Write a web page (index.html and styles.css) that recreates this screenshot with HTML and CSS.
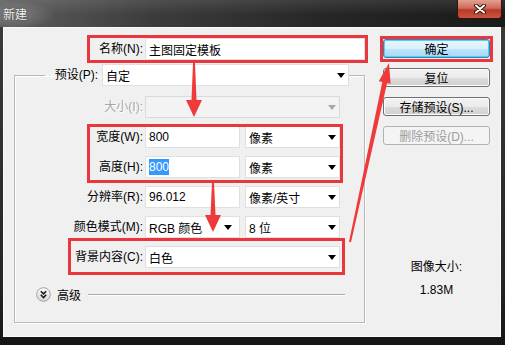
FILE: index.html
```html
<!DOCTYPE html>
<html lang="zh-CN">
<head>
  <meta charset="UTF-8" />
  <title>新建</title>
  <link rel="stylesheet" href="styles.css">
</head>
<body>

<div class="window">
  <div class="titlebar">
    <span class="title">新建</span>
    <div class="close">
      <svg width="14" height="10" viewBox="0 0 14 10">
        <path d="M3 1.5 L11 8.5 M11 1.5 L3 8.5" stroke="#3a1010" stroke-width="4" stroke-linecap="round"/>
        <path d="M3 1.5 L11 8.5 M11 1.5 L3 8.5" stroke="#fff" stroke-width="2" stroke-linecap="round"/>
      </svg>
    </div>
  </div>

  <div class="client">
    <div class="main">
      <div class="name-row">
        <label class="lbl">名称(N):</label>
        <div class="field name">主图固定模板</div>
      </div>

      <fieldset class="group">
        <legend>
          <label class="lbl legend-lbl">预设(P):</label>
          <div class="select preset"><span>自定</span><i class="caret"></i></div>
        </legend>

        <div class="grid">
          <label class="lbl dim">大小(I):</label>
          <div class="select span2 disabled"><span></span><i class="caret"></i></div>

          <label class="lbl">宽度(W):</label>
          <div class="field">800</div>
          <div class="select unit"><span>像素</span><i class="caret"></i></div>

          <label class="lbl">高度(H):</label>
          <div class="field"><span class="sel">800</span></div>
          <div class="select unit"><span>像素</span><i class="caret"></i></div>

          <label class="lbl">分辨率(R):</label>
          <div class="field">96.012</div>
          <div class="select unit"><span>像素/英寸</span><i class="caret"></i></div>

          <label class="lbl">颜色模式(M):</label>
          <div class="select mode"><span>RGB 颜色</span><i class="caret"></i></div>
          <div class="select unit"><span>8 位</span><i class="caret"></i></div>

          <label class="lbl">背景内容(C):</label>
          <div class="select span2"><span>白色</span><i class="caret"></i></div>
        </div>

        <div class="advanced">
          <svg class="adv-icon" width="15" height="15" viewBox="0 0 15 15">
            <defs>
              <linearGradient id="ag" x1="0" y1="0" x2="0" y2="1">
                <stop offset="0" stop-color="#ffffff"/>
                <stop offset="1" stop-color="#d4d4d4"/>
              </linearGradient>
            </defs>
            <circle cx="7.5" cy="7.5" r="6.8" fill="url(#ag)" stroke="#a0a0a0"/>
            <path d="M4.8 4.2 L7.5 6.9 L10.2 4.2 M4.8 7.8 L7.5 10.5 L10.2 7.8" fill="none" stroke="#1a1a1a" stroke-width="1.6"/>
          </svg>
          <span>高级</span>
          <div class="rule"></div>
        </div>
      </fieldset>
    </div>

    <div class="side">
      <button class="btn default">确定</button>
      <button class="btn">复位</button>
      <button class="btn">存储预设(S)...</button>
      <button class="btn" disabled>删除预设(D)...</button>
      <div class="info">
        <div>图像大小:</div>
        <div>1.83M</div>
      </div>
    </div>
  </div>

  <!-- red annotation marks drawn over the dialog -->
  <svg class="marks" width="505" height="345" viewBox="0 0 505 345">
    <g fill="none" stroke="#e8383d" stroke-width="3">
      <rect x="88.5" y="36.5" width="278" height="25"/>
      <rect x="88.5" y="125.5" width="253" height="56"/>
      <rect x="69.5" y="239.5" width="274" height="34"/>
      <rect x="381.5" y="37.5" width="110" height="23"/>
    </g>
    <g fill="#ee3a3a">
      <polygon points="193,63 195,63 196.5,100 202,100 194,117 186,100 191.5,100"/>
      <polygon points="212,183 214,183 215.5,215 221,215 213,232 205,215 210.5,215"/>
      <polygon points="349,241.8 351,242.2 387.1,83 390.6,83.8 389,63 378.8,81.2 382.3,82"/>
    </g>
  </svg>
</div>

</body>
</html>
```

FILE: styles.css
```css
body {
  margin: 0;
  font-family: "Liberation Sans", "Noto Sans CJK SC", sans-serif;
  font-size: 12px;
  color: #000;
  background: #fff;
}
.window {
  position: relative;
  width: 505px;
  height: 345px;
  overflow: hidden;
  background: linear-gradient(#3c3c3c, #262626 80%, #151515);
}
.titlebar {
  height: 27px;
  display: flex;
  justify-content: space-between;
  align-items: flex-start;
  background:
    radial-gradient(ellipse 40px 14px at 16px 15px, rgba(255,255,255,0.22), rgba(255,255,255,0)),
    linear-gradient(rgba(255,255,255,0.10), rgba(255,255,255,0) 55%),
    linear-gradient(to right, #5e5e5e, #3c3c3c 30%, #262626 65%, #1a1a1a);
}
.title {
  padding: 8px 0 0 3px;
  line-height: 14px;
  color: #f2f2f2;
  text-shadow: 0 0 2px rgba(0,0,0,0.6);
}
.close {
  width: 45px;
  height: 19px;
  margin-right: 3px;
  box-sizing: border-box;
  border: 1px solid #3b1010;
  border-top: none;
  border-radius: 0 0 4px 4px;
  background: linear-gradient(#e3a08f, #cf6a58 45%, #b8382a 55%, #c9563c);
  display: flex;
  align-items: center;
  justify-content: center;
}
.client {
  margin: 0 4px 0 3px;
  height: 310px;
  background: #f0f0f0;
  box-shadow: inset 0 0 0 1px #fafafa;
  display: flex;
}
.main {
  width: 351px;
  margin-left: 11px;
  padding-top: 11px;
}
.lbl {
  text-align: right;
  padding-right: 2px;
  line-height: 22px;
  white-space: nowrap;
}
.lbl.dim {
  color: #a6a6a6;
  text-shadow: 1px 1px 0 #fff;
}
.name-row {
  display: flex;
}
.name-row .lbl {
  width: 129px;
}
.field,
.select {
  height: 22px;
  box-sizing: border-box;
  background: #fff;
  border: 1px solid #e0e0e0;
  padding: 0 3px;
  display: flex;
  align-items: center;
  white-space: nowrap;
}
.field.name {
  width: 220px;
}
.select span {
  flex: 1;
}
.caret {
  width: 0;
  height: 0;
  border-left: 4px solid transparent;
  border-right: 4px solid transparent;
  border-top: 5px solid #000;
}
.select.disabled {
  background: #f3f3f3;
  border-color: #dadada;
}
.select.disabled .caret {
  border-top-color: #a8a8a8;
}
.sel {
  background: #3399ff;
  color: #fff;
  padding: 1px 0;
}
.group {
  margin: 4px 0 0;
  padding: 10px 0 20px;
  border: 1px solid #b8b8b8;
  box-shadow: inset 1px 1px 0 #fff, 1px 1px 0 #fff;
  min-width: 0;
}
.group legend {
  display: flex;
  padding: 0;
  margin-left: 30px;
}
.legend-lbl {
  width: 53px;
}
.select.preset {
  width: 247px;
  margin-left: 2px;
}
.grid {
  display: grid;
  grid-template-columns: 130px 95px 100px;
  grid-auto-rows: 22px;
  row-gap: 8px;
}
.grid .span2 {
  grid-column: span 2;
  width: 195px;
}
.grid .unit {
  margin-left: 5px;
}
.grid .mode .caret {
  margin-right: 4px;
}
.advanced {
  display: flex;
  align-items: center;
  height: 16px;
  margin-top: 18px;
  padding: 0 19px 0 21px;
}
.adv-icon {
  flex: none;
}
.advanced span {
  margin-left: 6px;
}
.rule {
  flex: 1;
  margin-left: 7px;
  height: 1px;
  background: #a8a8a8;
  box-shadow: 0 1px 0 #fff;
}
.side {
  width: 107px;
  margin-left: 18px;
  padding-top: 12px;
  display: flex;
  flex-direction: column;
  gap: 10px;
}
.btn {
  height: 19px;
  padding: 0;
  font: inherit;
  color: #000;
  border: 1px solid #707070;
  border-radius: 3px;
  background: linear-gradient(#f2f2f2, #ebebeb 50%, #dddddd 51%, #cfcfcf);
  box-shadow: inset 0 0 0 1px #fcfcfc;
}
.btn.default {
  border-color: #3c7fb1;
  background: linear-gradient(#eaf6fd, #d9f0fc 50%, #bee6fd 51%, #a7d9f5);
  box-shadow: inset 0 0 0 1px #48d5fb;
}
.btn:disabled {
  color: #9c9c9c;
  border-color: #adb2b5;
  background: #f4f4f4;
  box-shadow: none;
}
.info {
  margin-top: 101px;
  text-align: center;
  line-height: 23px;
}
.marks {
  position: absolute;
  top: 0;
  left: 0;
  pointer-events: none;
}
```
